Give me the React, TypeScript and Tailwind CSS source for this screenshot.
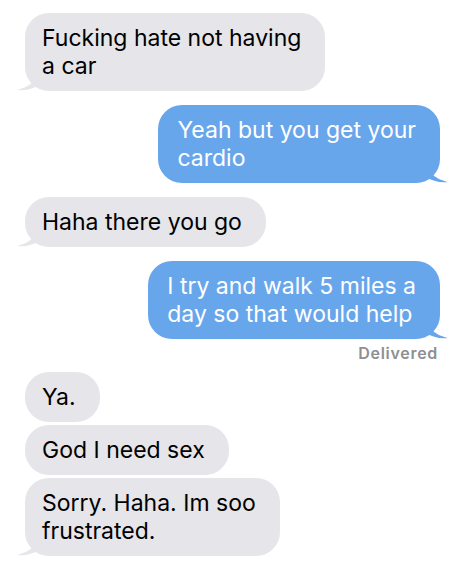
import React from "react";

type Msg = { from: "me" | "them"; lines: string[]; tail?: boolean };

function TailLeft() {
  return (
    <svg
      className="absolute bottom-0 left-[-8px]"
      width="22"
      height="22"
      viewBox="0 0 22 22"
    >
      <path d="M20 0 C20 10 16 17 0 21 C8 22 16 20 22 16 Z" fill="#e5e5ea" />
    </svg>
  );
}

function TailRight() {
  return (
    <svg
      className="absolute bottom-0 right-[-8px]"
      width="22"
      height="22"
      viewBox="0 0 22 22"
    >
      <path d="M2 0 C2 10 6 17 22 21 C14 22 6 20 0 16 Z" fill="#68a6ec" />
    </svg>
  );
}

function Bubble({ from, lines, tail }: Msg) {
  const mine = from === "me";
  return (
    <div className={mine ? "flex justify-end" : "flex justify-start"}>
      <div
        className={
          mine
            ? "relative rounded-[24px] bg-[#68a6ec] pl-[19px] pr-[24px] py-[11px] text-white"
            : "relative rounded-[24px] bg-[#e5e5ea] pl-[17px] pr-[24px] py-[11px] text-black"
        }
      >
        {tail && (mine ? <TailRight /> : <TailLeft />)}
        <p className="relative text-[23px] leading-[28px] whitespace-nowrap">
          {lines.map((l, i) => (
            <React.Fragment key={i}>
              {i > 0 && <br />}
              {l}
            </React.Fragment>
          ))}
        </p>
      </div>
    </div>
  );
}

export default function App() {
  return (
    <div
      className="w-[474px] h-[575px] overflow-hidden bg-white pl-[25px] pr-[34px] pt-[13px]"
      style={{ fontFamily: 'Inter, "Liberation Sans", Arial, sans-serif' }}
    >
      <div className="flex flex-col">
        <Bubble from="them" tail lines={["Fucking hate not having", "a car"]} />
        <div className="mt-[14px]">
          <Bubble from="me" tail lines={["Yeah but you get your", "cardio"]} />
        </div>
        <div className="mt-[14px]">
          <Bubble from="them" tail lines={["Haha there you go"]} />
        </div>
        <div className="mt-[14px]">
          <Bubble from="me" tail lines={["I try and walk 5 miles a", "day so that would help"]} />
        </div>
        <p className="mt-[4px] text-right text-[16px] leading-[20px] font-semibold tracking-[0.7px] text-[#8e8e93] pr-[2px]">
          Delivered
        </p>
        <div className="mt-[9px] flex flex-col gap-[3px]">
          <Bubble from="them" lines={["Ya."]} />
          <Bubble from="them" lines={["God I need sex"]} />
          <Bubble from="them" tail lines={["Sorry. Haha. Im soo", "frustrated."]} />
        </div>
      </div>
    </div>
  );
}
